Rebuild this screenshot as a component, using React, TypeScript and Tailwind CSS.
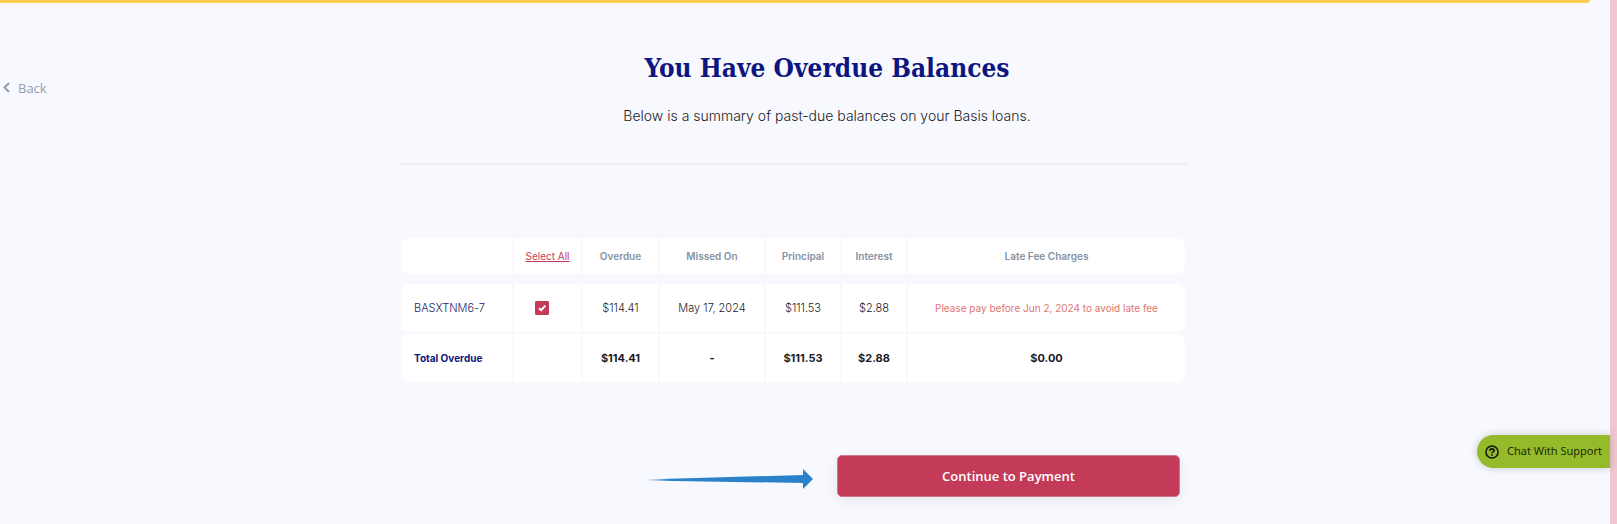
import React, { useState } from "react";

type Loan = {
  id: string;
  overdue: number;
  missedOn: string;
  principal: number;
  interest: number;
  lateFee: number;
  note: string;
};

const loans: Loan[] = [
  {
    id: "BASXTNM6-7",
    overdue: 114.41,
    missedOn: "May 17, 2024",
    principal: 111.53,
    interest: 2.88,
    lateFee: 0,
    note: "Please pay before Jun 2, 2024 to avoid late fee",
  },
];

const money = (n: number) => `$${n.toFixed(2)}`;

const divided = "border-r-2 border-[#f8f9ff]";

export default function OverdueBalances() {
  const [selected, setSelected] = useState<string[]>(["BASXTNM6-7"]);

  const chosen = loans.filter((l) => selected.includes(l.id));
  const sum = (key: "overdue" | "principal" | "interest" | "lateFee") =>
    money(chosen.reduce((total, l) => total + l[key], 0));

  function toggle(id: string) {
    setSelected(
      selected.includes(id) ? selected.filter((s) => s !== id) : [...selected, id]
    );
  }

  return (
    <div className="relative min-h-screen border-r-7 border-[#f2c6d0] bg-[#f8f9ff] font-['Inter',sans-serif] text-[#1b1b1f]">
      {/* Progress bar */}
      <div className="mr-5 h-[3px] rounded-br-full bg-[#ffcd50]" />

      <div className="grid grid-cols-[1fr_minmax(0,788px)_1fr] pr-6">
        <div className="pt-[72px] pl-[3px]">
          <a
            href="#"
            className="inline-flex items-center gap-2 font-['Open_Sans',sans-serif] text-[13px] leading-6 text-[#929db3]"
          >
            <svg width="7" height="11" viewBox="0 0 7 11" fill="none" stroke="currentColor" strokeWidth="2">
              <path d="M6 1 1.5 5.5 6 10" />
            </svg>
            Back
          </a>
        </div>

        <main>
          {/* Heading */}
          <header className="border-b-2 border-[#eceef4] pt-[45px] pb-[35px] pl-[68px] text-center">
            <h1 className="font-['Roboto_Slab','DejaVu_Serif_Condensed','DejaVu_Serif',serif] text-[26px] leading-10 font-bold text-[#0d1580]">
              You Have Overdue Balances
            </h1>
            <p className="mt-4 text-sm leading-6 font-light">
              Below is a summary of past-due balances on your Basis loans.
            </p>
          </header>

          {/* Balances */}
          <div className="mt-[73px] px-[2px]">
            <table className="w-full table-fixed border-separate border-spacing-0 text-center text-[11px]">
              <colgroup>
                <col className="w-[113px]" />
                <col className="w-[69px]" />
                <col className="w-[77px]" />
                <col className="w-[106px]" />
                <col className="w-[76px]" />
                <col className="w-[66px]" />
                <col />
              </colgroup>
              <thead>
                <tr className="h-9 text-[10px] text-[#8592a3] [&>*]:bg-white [&>*]:font-semibold">
                  <td className={`rounded-l-lg ${divided}`} />
                  <th className={divided}>
                    <button
                      type="button"
                      onClick={() => setSelected(loans.map((l) => l.id))}
                      className="font-normal text-[#c33b59] underline"
                    >
                      Select All
                    </button>
                  </th>
                  <th className={divided}>Overdue</th>
                  <th className={divided}>Missed On</th>
                  <th className={divided}>Principal</th>
                  <th className={divided}>Interest</th>
                  <th className="rounded-r-lg">Late Fee Charges</th>
                </tr>
              </thead>
              <tbody>
                <tr className="h-[10px]" aria-hidden="true">
                  <td colSpan={7} className="p-0" />
                </tr>
                {loans.map((loan) => (
                  <tr key={loan.id} className="h-12 font-light [&>*]:bg-white">
                    <td className={`rounded-l-lg pl-[13px] text-left text-[#1c2366] ${divided}`}>
                      {loan.id}
                    </td>
                    <td className={divided}>
                      <label className="relative mr-3 block size-[14px] justify-self-center">
                        <input
                          type="checkbox"
                          aria-label={`Select ${loan.id}`}
                          checked={selected.includes(loan.id)}
                          onChange={() => toggle(loan.id)}
                          className="peer block size-[14px] appearance-none rounded-[1px] border border-[#c33b59] bg-white checked:bg-[#c33b59]"
                        />
                        <svg
                          className="pointer-events-none absolute inset-0 hidden peer-checked:block"
                          width="14"
                          height="14"
                          viewBox="0 0 14 14"
                          fill="none"
                          stroke="white"
                          strokeWidth="2"
                        >
                          <path d="M4 7.2 6.2 9.2 10.4 4.6" />
                        </svg>
                      </label>
                    </td>
                    <td className={divided}>{money(loan.overdue)}</td>
                    <td className={divided}>{loan.missedOn}</td>
                    <td className={divided}>{money(loan.principal)}</td>
                    <td className={divided}>{money(loan.interest)}</td>
                    <td className="rounded-r-lg text-[10px] font-normal text-[#dd7672]">
                      {loan.note}
                    </td>
                  </tr>
                ))}
                <tr className="h-[2px]" aria-hidden="true">
                  <td colSpan={7} className="p-0" />
                </tr>
                <tr className="h-12 font-bold [&>*]:bg-white">
                  <td className={`rounded-l-lg pl-[13px] text-left text-[10px] text-[#0d1580] ${divided}`}>
                    Total Overdue
                  </td>
                  <td className={divided} />
                  <td className={divided}>{sum("overdue")}</td>
                  <td className={divided}>-</td>
                  <td className={divided}>{sum("principal")}</td>
                  <td className={divided}>{sum("interest")}</td>
                  <td className="rounded-r-lg">{sum("lateFee")}</td>
                </tr>
              </tbody>
            </table>
          </div>

          {/* Payment action */}
          <div className="mt-[73px] mb-7 flex items-center justify-end gap-6 pr-[7px]">
            <svg className="mt-1.5" width="169" height="20" viewBox="0 0 169 20">
              <defs>
                <linearGradient id="tail">
                  <stop offset="0" stopColor="#2b82c9" stopOpacity="0" />
                  <stop offset="0.15" stopColor="#2b82c9" />
                </linearGradient>
              </defs>
              <path d="M0 10.5 159 6V0l10 10-10 10v-6L0 11.5Z" fill="url(#tail)" />
            </svg>
            <button
              type="button"
              className="h-[42px] w-[343px] rounded-[5px] border border-[#d5758a] bg-[#c33b59] pt-[2px] font-['Open_Sans',sans-serif] text-[13px] font-semibold text-white shadow-[0_4px_14px_rgba(0,0,0,0.07)]"
            >
              Continue to Payment
            </button>
          </div>
        </main>
      </div>

      {/* Support chat launcher */}
      <button
        type="button"
        className="absolute right-0 bottom-[57px] flex h-[33px] items-center gap-2 rounded-l-full bg-[#95bb2b] pr-2 pl-2 font-['Noto_Sans',sans-serif] text-[11px] text-[#1d2a05] shadow-[0_0_8px_rgba(0,0,0,0.2)]"
      >
        <svg width="14" height="14" viewBox="0 0 15 15" fill="none" stroke="#111" strokeWidth="2">
          <circle cx="7.5" cy="7.5" r="6.5" strokeWidth="1.6" />
          <path d="M5.2 6.2C5.2 3.4 9.8 3.4 9.8 6 9.8 7.4 7.5 7.3 7.5 8.8M7.5 9.8v1.8" strokeWidth="1.8" />
        </svg>
        Chat With Support
      </button>
    </div>
  );
}
